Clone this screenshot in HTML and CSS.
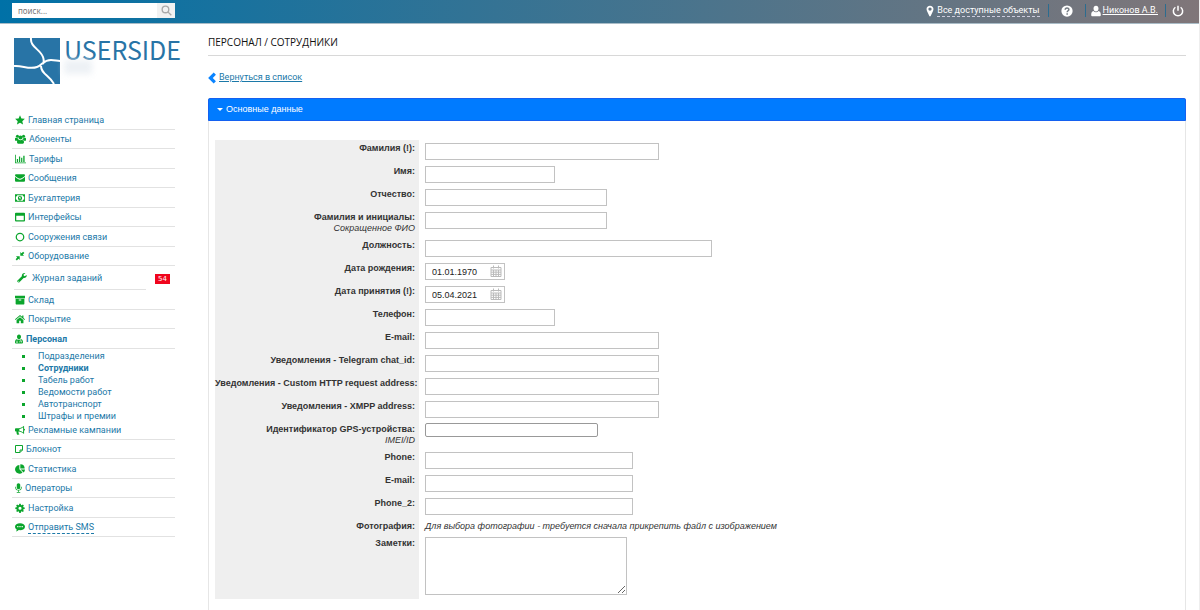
FILE: index.html
```html
<!DOCTYPE html>
<html lang="ru">
<head>
<meta charset="utf-8">
<title>Персонал / Сотрудники</title>
<link rel="stylesheet" href="styles.css">
</head>
<body>
<header class="topbar">
  <form class="search">
    <input class="search-input" type="text" placeholder="поиск..." aria-label="поиск">
    <button class="search-button" type="button" aria-label="Найти"><svg class="search-icon" viewBox="0 0 16 16"><circle cx="6.500" cy="6.500" r="4.800"/><path d="M10 10l5 5"/></svg></button>
  </form>
  <div class="tools">
    <svg class="pin" viewBox="0 0 12 18"><path fill-rule="evenodd" d="M6 1C3 1 .8 3.200.8 6c0 1.500.5 2.500 1 3.600L5 16.500c.4.800 1.600.800 2 0l3.200-6.900c.5-1.100 1-2.100 1-3.600C11.200 3.200 9 1 6 1zm0 2.600a2.500 2.500 0 1 1 0 5 2.500 2.500 0 0 1 0-5z"/></svg>
    <a class="tool-link dotted" href="#">Все доступные объекты</a>
    <a class="tool help" href="#" aria-label="Помощь"><svg class="tool-icon" viewBox="0 0 16 16"><circle cx="8" cy="8" r="7.500"/><path class="question" d="M5.600 6.200c0-3 4.900-3 4.900-.2 0 1.700-2.300 1.600-2.300 3.600M8.200 11v2"/></svg></a>
    <a class="tool user" href="#"><svg class="user-icon" viewBox="0 0 16 18"><path d="M8 .5c2.500 0 4 1.800 4 4.500S10.300 9.800 8 9.800 4 7.700 4 5 5.500.5 8 .5zM4 9c1 1.200 2.400 1.900 4 1.900S11 10.200 12 9c2.700.3 3.700 3 3.700 6.200 0 1.300-.8 2.300-2.200 2.300h-11C1.100 17.500.3 16.500.3 15.200.3 12 1.300 9.300 4 9z"/></svg><span class="tool-link">Никонов А.В.</span></a>
    <button class="tool power" type="button" aria-label="Выход"><svg class="tool-icon line" viewBox="0 0 16 16"><path d="M4.500 3A6.200 6.200 0 1 0 11.500 3M8 1v6.500"/></svg></button>
  </div>
</header>
<div class="layout">
  <aside class="sidebar">
    <a class="brand" href="#">
      <svg class="logo" viewBox="0 0 46 46"><path class="logo-bg" d="M0 0h46v46H0z"/><path class="logo-line" d="M17 0c-1 9 9 11 12 19 1 3 1 5 0 7M0 28c8-1 15 4 23 1 6-2 6-7 14-7 4 0 6 1 9 1M27 28c0 8 8 9 13 18"/></svg>
      <span class="brand-text">USERSIDE<span class="brand-shade"></span></span>
    </a>
    <nav class="nav">
      <a class="item" href="#"><svg viewBox="0 0 16 16"><path d="M8 .5l2.300 5 5.500.6-4.100 3.700 1.200 5.500L8 12.500l-4.900 2.800 1.200-5.500L.2 6.100l5.500-.6z"/></svg>Главная страница</a>
      <a class="item" href="#"><svg class="wide" viewBox="0 0 18 16"><circle cx="4" cy="3.500" r="2.500"/><circle cx="14" cy="3.500" r="2.500"/><circle cx="9" cy="5.500" r="3.300"/><path d="M0 10V7c0-1 1-1.500 2-1l3 1c0 1 .5 2 1 2.500L4 11H1.500C.5 11 0 10.500 0 10zM18 10V7c0-1-1-1.500-2-1l-3 1c0 1-.5 2-1 2.500l2 1.500h2.500c1 0 1.500-.5 1.500-1zM5.500 9c2 1.500 5 1.500 7 0 1.500.5 2.200 2 2.200 4.500 0 1.500-.7 2.200-2 2.200H5.300c-1.300 0-2-.7-2-2.200C3.300 11 4 9.500 5.500 9z"/></svg>Абоненты</a>
      <a class="item" href="#"><svg class="wide" viewBox="0 0 18 16"><path d="M0 1h1.300v12.700H18V15H0zM3 8h2v5H3zM6.500 4h2v9h-2zM10 6h2v7h-2zM13.500 2.500h2.200V13h-2.200z"/></svg>Тарифы</a>
      <a class="item" href="#"><svg viewBox="0 0 16 16"><path d="M0 3.500C0 2.500.7 2 1.500 2h13c.9 0 1.500.6 1.500 1.500C16 5 11 8.800 8 9 5 8.800 0 5 0 3.500zM0 6c3 2.500 5.500 4.800 8 4.800S13 8.500 16 6v6.500c0 .9-.6 1.500-1.500 1.500h-13C.6 14 0 13.400 0 12.500z"/></svg>Сообщения</a>
      <a class="item" href="#"><svg viewBox="0 0 16 16"><path fill-rule="evenodd" d="M0 2h16v12H0zM3.500 3.500C3.500 5 2.500 5.500 1.300 5.500v5c1.200 0 2.200.5 2.200 2h9c0-1.500 1-2 2.200-2v-5c-1.200 0-2.200-.5-2.200-2zM8 4.200c2 0 3.300 1.800 3.300 3.800S10 11.800 8 11.800 4.700 10 4.700 8 6 4.200 8 4.200zm-.3 1.500L6.500 7v.8h1V10h1.300V5.700z"/></svg>Бухгалтерия</a>
      <a class="item" href="#"><svg viewBox="0 0 16 16"><path fill-rule="evenodd" d="M1.500 1h13c.9 0 1.500.6 1.500 1.500v11c0 .9-.6 1.500-1.500 1.500h-13C.6 15 0 14.400 0 13.500v-11C0 1.600.6 1 1.500 1zM2 6v7h12V6z"/></svg>Интерфейсы</a>
      <a class="item" href="#"><svg viewBox="0 0 16 16"><circle class="ring" cx="8" cy="8" r="6"/></svg>Сооружения связи</a>
      <a class="item" href="#"><svg viewBox="0 0 16 16"><path d="M8.500 7.500v-6l2 2L13 1l2 2-2.500 2.500 2 2zM7.500 8.500v6l-2-2L3 15l-2-2 2.500-2.500-2-2z"/></svg>Оборудование</a>
      <a class="item task" href="#"><svg viewBox="0 0 16 16"><path fill-rule="evenodd" d="M15.300 3.200l-3 1.800-1.700-1 .1-2 2.700-1.600C10.500-.6 7.500 1.500 7.700 5L.8 11.800c-1.600 1.700 1.200 4.500 3 3L10.600 8c3.400.5 5.700-2 4.700-4.800zM2.700 12.200a.8.8 0 1 1 0 1.600.8.8 0 0 1 0-1.600z"/></svg><span>Журнал заданий</span></a><span class="badge">54</span>
      <a class="item" href="#"><svg viewBox="0 0 16 16"><path fill-rule="evenodd" d="M0 1h16v4H0zM1 6h14v8c0 .6-.4 1-1 1H2c-.6 0-1-.4-1-1zm5 1.200v1.500h4V7.200z"/></svg>Склад</a>
      <a class="item" href="#"><svg viewBox="0 0 16 16"><path d="M8 1.500l3.500 3V2.300h2v4L16 8.500l-.9 1L8 3.600.9 9.500 0 8.500zM8 5l5.500 4.600v5H9.300v-4H6.700v4H2.500v-5z"/></svg>Покрытие</a>
      <a class="item current" href="#"><svg class="slim" viewBox="0 0 14 16"><path fill-rule="evenodd" d="M7 0c2.200 0 3.500 1.700 3.500 4S9.200 8.500 7 8.500 3.500 6.300 3.500 4 4.800 0 7 0zM3 8.300c2.300 1.500 5.700 1.500 8 0 2 .3 3 2.500 3 5.200 0 1.500-.8 2.500-2.300 2.500H2.300C.8 16 0 15 0 13.500c0-2.700 1-4.900 3-5.200zm0 2.200v2a1.200 1.200 0 1 0 1 0v-2zm6 0c-1 .5-1 1.500-1 3.500h1c0-1.500 0-2.200 1-2.200s1 .7 1 2.200h1c0-2 0-3-1-3.500z"/></svg>Персонал</a>
      <ul class="subnav">
        <li><a href="#">Подразделения</a></li>
        <li><a class="current" href="#">Сотрудники</a></li>
        <li><a href="#">Табель работ</a></li>
        <li><a href="#">Ведомости работ</a></li>
        <li><a href="#">Автотранспорт</a></li>
        <li><a href="#">Штрафы и премии</a></li>
      </ul>
      <a class="item" href="#"><svg viewBox="0 0 16 16"><path fill-rule="evenodd" d="M14.500 1v5c2 .3 2 2.700 0 3v5.300C11.500 12 9 10.500 6 10.300c-1 .5-.8 1.500 0 2.200-.5 1 .3 1.500 1.200 2.300-.9 1-3.200.9-4 .2C2.800 13.500 2 12 2.500 10.300H1.300C.5 10.300 0 9.700 0 9V6.300C0 5.600.5 5 1.300 5H6c3 0 5.500-2 8.500-4zM13 3.400C11 4.800 9 5.900 7 6.200v2.900c2 .3 4 1.300 6 2.700z"/></svg>Рекламные кампании</a>
      <a class="item" href="#"><svg class="slim" viewBox="0 0 16 16"><path class="note" d="M1 1h14v9l-5 5H1zM15 10h-5v5"/></svg>Блокнот</a>
      <a class="item" href="#"><svg viewBox="0 0 16 16"><path d="M7 1.500V8.500l5 5A7 7 0 1 1 7 1.500zM8.500.5A7 7 0 0 1 15.500 7.300h-7zM9 8.800h7a7 7 0 0 1-2.200 4.800z"/></svg>Статистика</a>
      <a class="item" href="#"><svg class="mic" viewBox="0 0 12 16"><path d="M6 0c1.900 0 3 1.200 3 3v4c0 1.800-1.100 3-3 3S3 8.800 3 7V3c0-1.800 1.100-3 3-3zM.5 6h1.200v1c0 2.700 1.600 4.300 4.300 4.300S10.300 9.700 10.300 7V6h1.200v1c0 3-1.700 5-4.900 5.400v2.300H9V16H3v-1.300h2.400v-2.300C2.200 12 .5 10 .5 7z"/></svg>Операторы</a>
      <a class="item" href="#"><svg viewBox="0 0 16 16"><path fill-rule="evenodd" d="M6.800 1h2.400l.4 2 1.200.5 1.700-1.200 1.700 1.700L13 5.700l.5 1.200 2 .3v2.400l-2 .3-.5 1.200 1.200 1.700-1.700 1.700-1.700-1.200-1.200.5-.4 2H6.800l-.4-2-1.200-.5-1.700 1.200-1.700-1.700L3 11.100l-.5-1.200-2-.3V7.200l2-.3L3 5.700 1.800 4l1.700-1.700 1.700 1.200L6.400 3zM8 5.800a2.500 2.500 0 1 0 0 5 2.500 2.500 0 0 0 0-5z"/></svg>Настройка</a>
      <a class="item" href="#"><svg viewBox="0 0 16 16"><path fill-rule="evenodd" d="M8 2c4.600 0 8 2.300 8 5.500S12.600 13 8 13c-.7 0-1.300 0-2-.2-1.500 1.300-3 2-4.500 2.200.8-1 1.300-2 1.300-3.200C1 10.800 0 9.300 0 7.500 0 4.300 3.400 2 8 2zM3.500 6.500v2h2v-2zm3.500 0v2h2v-2zm3.500 0v2h2v-2z"/></svg><span class="sms">Отправить SMS</span></a>
    </nav>
  </aside>
  <main class="content">
    <h1 class="title">ПЕРСОНАЛ / СОТРУДНИКИ</h1>
    <a class="back" href="#"><svg class="back-icon" viewBox="0 0 10 14"><path d="M8.500 1.500L3 7l5.500 5.500"/></svg><span>Вернуться в список</span></a>
    <section class="panel">
      <h2 class="panel-head"><button class="panel-toggle" type="button"><span class="caret"></span>Основные данные</button></h2>
      <form class="fields">
        <div class="row"><div class="label"><label for="f1">Фамилия (!):</label></div><input class="field w-l" id="f1" type="text"></div>
        <div class="row"><div class="label"><label for="f2">Имя:</label></div><input class="field w-s" id="f2" type="text"></div>
        <div class="row"><div class="label"><label for="f3">Отчество:</label></div><input class="field w-m" id="f3" type="text"></div>
        <div class="row hinted"><div class="label"><label for="f4">Фамилия и инициалы:</label><i>Сокращенное ФИО</i></div><input class="field w-m" id="f4" type="text"></div>
        <div class="row"><div class="label"><label for="f5">Должность:</label></div><input class="field w-xl" id="f5" type="text"></div>
        <div class="row"><div class="label"><label for="f6">Дата рождения:</label></div><div class="date"><input class="field" id="f6" type="text" value="01.01.1970"><svg class="calendar" viewBox="0 0 12 12"><path d="M1 2.500h10v9H1zM1 5h10M3.500 5v6.500M6 5v6.500M8.500 5v6.500M1 7.200h10M1 9.400h10M3.500.5v3M8.500.5v3"/></svg></div></div>
        <div class="row"><div class="label"><label for="f7">Дата принятия (!):</label></div><div class="date"><input class="field" id="f7" type="text" value="05.04.2021"><svg class="calendar" viewBox="0 0 12 12"><path d="M1 2.500h10v9H1zM1 5h10M3.500 5v6.500M6 5v6.500M8.500 5v6.500M1 7.200h10M1 9.400h10M3.500.5v3M8.500.5v3"/></svg></div></div>
        <div class="row"><div class="label"><label for="f8">Телефон:</label></div><input class="field w-s" id="f8" type="text"></div>
        <div class="row"><div class="label"><label for="f9">E-mail:</label></div><input class="field w-l" id="f9" type="text"></div>
        <div class="row"><div class="label"><label for="f10">Уведомления - Telegram chat_id:</label></div><input class="field w-l" id="f10" type="text"></div>
        <div class="row"><div class="label"><label for="f11">Уведомления - Custom HTTP request address:</label></div><input class="field w-l" id="f11" type="text"></div>
        <div class="row"><div class="label"><label for="f12">Уведомления - XMPP address:</label></div><input class="field w-l" id="f12" type="text"></div>
        <div class="row hinted"><div class="label"><label for="f13">Идентификатор GPS-устройства:</label><i>IMEI/ID</i></div><input class="field gps" id="f13" type="text"></div>
        <div class="row"><div class="label"><label for="f14">Phone:</label></div><input class="field w-p" id="f14" type="text"></div>
        <div class="row"><div class="label"><label for="f15">E-mail:</label></div><input class="field w-p" id="f15" type="text"></div>
        <div class="row"><div class="label"><label for="f16">Phone_2:</label></div><input class="field w-p" id="f16" type="text"></div>
        <div class="row short"><div class="label"><b>Фотография:</b></div><i class="photo-note">Для выбора фотографии - требуется сначала прикрепить файл с изображением</i></div>
        <div class="row notes"><div class="label"><label for="f18">Заметки:</label></div><textarea class="field area" id="f18"></textarea></div>
      </form>
    </section>
  </main>
</div>
</body>
</html>
```

FILE: styles.css
```css
* { box-sizing: border-box; }

body {
  display: flex;
  flex-direction: column;
  min-height: 100vh;
  margin: 0;
  border-right: 1px solid #eee;
  background: #fff;
  color: #333;
  font: 9px/11px "Liberation Sans", Arial, sans-serif;
}

a { color: #1c79a8; text-decoration: none; }
button { padding: 0; border: 0; background: none; color: inherit; font: inherit; }

/* top bar */
.topbar {
  display: flex;
  flex: none;
  align-items: flex-start;
  justify-content: space-between;
  height: 24px;
  padding: 3px 12px 0;
  border-bottom: 1px solid #a9bcc7;
  background: linear-gradient(90deg, #0071a7, #807679);
  color: #fff;
  font-family: Roboto, sans-serif;
}
.search { display: flex; width: 163px; height: 15px; background: #fff; }
.search-input {
  flex: 1;
  min-width: 0;
  padding: 0 6px;
  border: 0;
  background: none;
  font: 8px/14px "Noto Sans", sans-serif;
}
.search-input::placeholder { color: #777; }
.search-button { width: 18px; background: #f2f2f2; }
.search-icon { display: block; width: 11px; height: 11px; margin: 0 auto; fill: none; stroke: #aaa; stroke-width: 2; }
.tools { display: flex; align-items: center; height: 15px; margin-right: 3px; }
.pin { width: 8px; height: 12px; margin-right: 3px; fill: #fff; }
.tool-link { color: #fff; font-size: 9px; line-height: 11px; text-decoration: underline; }
.tool-link.dotted { margin-right: 8px; border-bottom: 1px dashed #ccd; text-decoration: none; }
.tool { display: flex; align-items: center; height: 13px; border-left: 1px solid #2b6c90; }
.help { padding: 0 12px; }
.user { gap: 2px; padding: 0 7px 0 5px; }
.power { padding-left: 6px; }
.tool-icon { width: 12px; height: 12px; fill: #fff; }
.question { fill: none; stroke: #757c84; stroke-width: 2; }
.tool-icon.line { fill: none; stroke: #fff; stroke-width: 2; }
.user-icon { width: 10px; height: 12px; fill: #fff; }

/* page frame */
.layout { display: grid; grid-template-columns: 163px minmax(0, 1fr); flex: 1; gap: 33px; padding: 0 13px 0 12px; }

/* sidebar */
.sidebar { padding-top: 14px; font-family: Roboto, sans-serif; }
.brand { display: flex; gap: 4px; height: 72px; padding-left: 2px; }
.logo { flex: none; width: 46px; height: 46px; }
.logo-bg { fill: #2874a6; }
.logo-line { fill: none; stroke: #fff; stroke-width: 2; }
.brand-text { color: #2874a6; font: 25px/22px "Noto Sans CJK SC", sans-serif; }
.brand-shade { display: block; width: 28px; height: 14px; background: #edf1f5; filter: blur(3px); }
.nav { display: flex; flex-wrap: wrap; align-items: flex-start; }
.item {
  display: flex;
  align-items: center;
  gap: 3px;
  width: 100%;
  height: 20px;
  padding-left: 3px;
  border-bottom: 1px solid #e2e2e2;
  font-size: 9px;
  line-height: 12px;
}
.item:nth-child(even) { height: 19px; }
.item svg { flex: none; width: 10px; height: 10px; fill: #0ba52c; }
.item svg.wide { width: 11px; }
.item svg.slim { width: 8px; }
.item svg.mic { width: 7px; }
.item .ring, .item .note { fill: none; stroke: #0ba52c; stroke-width: 2; }
.item.task { width: 132px; height: 24px; margin-left: 2px; gap: 5px; }
.badge { margin: 8px 0 0 9px; padding: 0 3px; background: #f0051d; color: #fff; font: 7px/10px "DejaVu Sans", sans-serif; }
.current { font-weight: 700; }
.subnav { width: 100%; margin: 1px 0 -2px; padding: 0 0 0 26px; font-size: 9px; line-height: 12px; list-style: none; }
.subnav li { display: flex; align-items: center; height: 12px; }
.subnav li::before { width: 3px; height: 3px; margin: 0 13px 0 -16px; background: #0ba52c; content: ""; }
.sms { border-bottom: 1px dashed #1c79a8; }

/* content */
.title {
  margin: 0;
  padding: 12px 0 6px;
  border-bottom: 1px solid #d8d8d8;
  color: #111;
  font: 10px/13px "Open Sans", sans-serif;
}
.back { display: flex; align-items: center; gap: 3px; height: 11px; margin: 16px 0 15px; font: 9px/11px Roboto, sans-serif; }
.back span { text-decoration: underline; }
.back-icon { width: 8px; height: 12px; fill: none; stroke: #0a84ff; stroke-width: 4; }
.panel { border: 1px solid #e6e6e6; border-width: 0 1px; }
.panel-head { margin: 0 -1px; border: 1px solid #1461f0; border-radius: 2px 2px 0 0; background: #007bff; color: #fff; font: 9px/21px "Liberation Sans", Arial, sans-serif; }
.panel-toggle { display: flex; align-items: center; gap: 3px; width: 100%; padding-left: 8px; }
.caret { border: 3px solid transparent; border-top-color: #fff; border-bottom: 0; }
.fields { padding: 19px 6px 11px; }
.row { display: flex; gap: 6px; height: 23px; }
.hinted { height: 28px; }
.short { height: 17px; }
.notes { height: 64px; }
.label { flex: none; width: 204px; padding: 3px 4px 0 0; background: #efefef; font-size: 9px; line-height: 11px; text-align: right; white-space: nowrap; }
.label label, .label b { display: block; font-weight: 700; }
.label i { display: block; }
.field { height: 17px; margin: 3px 0 0; padding: 0 6px; border: 1px solid #c2c2c2; background: #fff; color: #222; font: 9px/13px "Liberation Sans", Arial, sans-serif; }
.w-s { width: 130px; }
.w-m { width: 182px; }
.w-p { width: 208px; }
.w-l { width: 234px; }
.w-xl { width: 287px; }
.gps { width: 173px; height: 14px; margin-top: 2px; border-color: #999; border-radius: 2px; }
.date { display: grid; width: 80px; }
.date .field { grid-area: 1 / 1; width: 80px; }
.calendar { grid-area: 1 / 1; justify-self: end; width: 12px; height: 12px; margin: 5px 3px 0 0; fill: none; stroke: #bbb; }
.photo-note { padding-top: 3px; font-size: 9px; line-height: 11px; }
.area { width: 202px; height: 58px; margin-top: 2px; }
```
